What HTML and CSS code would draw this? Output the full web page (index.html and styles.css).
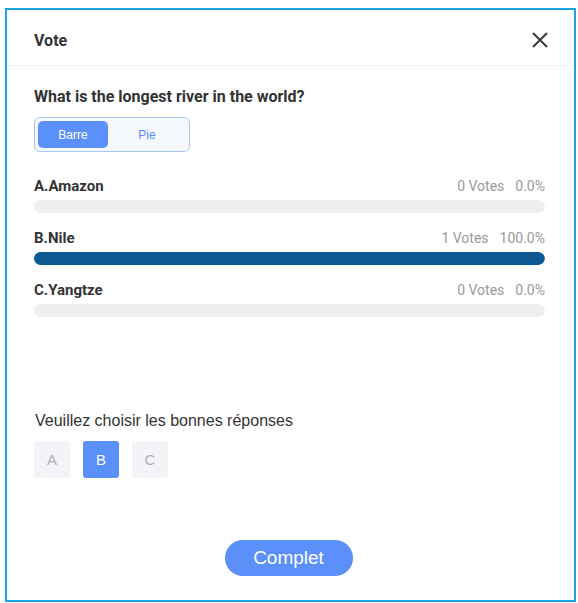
FILE: index.html
```html
<!DOCTYPE html>
<html>
<head>
<meta charset="utf-8">
<link rel="stylesheet" href="styles.css">
</head>
<body>
<div class="frame">
  <div class="header">
    <div class="title">Vote</div>
    <svg class="close" width="18" height="18" viewBox="0 0 18 18"><path d="M2 2L16 16M16 2L2 16" stroke="#3a3a3a" stroke-width="2" fill="none"/></svg>
  </div>
  <div class="body">
    <div class="question">What is the longest river in the world?</div>
    <div class="toggle">
      <div class="tab active">Barre</div>
      <div class="tab">Pie</div>
    </div>
    <div class="options">
      <div class="option">
        <div class="row"><span class="label">A.Amazon</span><span class="stats">0 Votes<span class="pct">0.0%</span></span></div>
        <div class="bar"><div class="fill" style="width:0%"></div></div>
      </div>
      <div class="option">
        <div class="row"><span class="label">B.Nile</span><span class="stats">1 Votes<span class="pct">100.0%</span></span></div>
        <div class="bar"><div class="fill" style="width:100%"></div></div>
      </div>
      <div class="option">
        <div class="row"><span class="label">C.Yangtze</span><span class="stats">0 Votes<span class="pct">0.0%</span></span></div>
        <div class="bar"><div class="fill" style="width:0%"></div></div>
      </div>
    </div>
    <div class="prompt">Veuillez choisir les bonnes réponses</div>
    <div class="choices">
      <div class="choice">A</div>
      <div class="choice selected">B</div>
      <div class="choice">C</div>
    </div>
    <div class="footer">
      <button class="submit">Complet</button>
    </div>
  </div>
</div>
</body>
</html>
```
FILE: styles.css
```css
html, body {
  margin: 0;
  padding: 0;
  background: #ffffff;
}
body {
  font-family: Roboto, "Liberation Sans", Arial, sans-serif;
  color: #333;
}
.frame {
  margin: 8px 2px 1px 5px;
  height: 594px;
  border: 2px solid #1ba4e3;
  box-sizing: border-box;
  display: flex;
  flex-direction: column;
}
.header {
  height: 50px;
  border-bottom: 1px solid #f0f0f0;
  display: flex;
  align-items: center;
  justify-content: space-between;
  padding: 5px 25px 0 27px;
  flex-shrink: 0;
}
.title {
  font-size: 16px;
  font-weight: 700;
  color: #333;
}
.close {
  display: block;
}
.body {
  flex: 1;
  display: flex;
  flex-direction: column;
  padding: 0 29px 0 27px;
}
.question {
  margin-top: 22px;
  font-size: 16px;
  font-weight: 700;
  color: #333;
  line-height: 18px;
}
.toggle {
  margin-top: 11px;
  width: 156px;
  height: 35px;
  box-sizing: border-box;
  border: 1px solid #a9c7ee;
  border-radius: 6px;
  background: #f5f9fe;
  display: flex;
  align-items: center;
  padding: 0 3px;
}
.tab {
  width: 70px;
  height: 27px;
  border-radius: 5px;
  display: flex;
  align-items: center;
  justify-content: center;
  font-family: "Liberation Sans", Arial, sans-serif;
  font-size: 12px;
  color: #5b8ff9;
}
.tab + .tab {
  width: 78px;
}
.tab.active {
  background: #5b8ff9;
  color: #fff;
}
.options {
  margin-top: 25px;
  display: flex;
  flex-direction: column;
  gap: 16px;
}
.row {
  display: flex;
  justify-content: space-between;
  align-items: baseline;
  height: 18px;
  line-height: 18px;
}
.label {
  font-size: 15px;
  font-weight: 700;
  color: #333;
}
.stats {
  font-size: 14px;
  color: #9a9a9a;
}
.pct {
  margin-left: 11px;
}
.bar {
  margin-top: 5px;
  height: 13px;
  border-radius: 7px;
  background: #efefef;
  overflow: hidden;
}
.fill {
  height: 100%;
  background: #0c5893;
  border-radius: 0 7px 7px 0;
}
.prompt {
  margin-top: 95px;
  font-family: "Liberation Sans", Arial, sans-serif;
  font-size: 16px;
  line-height: 18px;
  color: #333;
  padding-left: 1px;
}
.choices {
  margin-top: 11px;
  display: flex;
  gap: 13px;
}
.choice {
  width: 36px;
  height: 37px;
  border-radius: 3px;
  background: #f3f4f8;
  color: #b0b0b0;
  font-family: "Liberation Sans", Arial, sans-serif;
  font-size: 15px;
  display: flex;
  align-items: center;
  justify-content: center;
}
.choice.selected {
  background: #5b8ff9;
  color: #fff;
}
.footer {
  flex: 1;
  display: flex;
  justify-content: center;
  align-items: flex-start;
  padding-top: 62px;
  padding-right: 2px;
}
.submit {
  width: 128px;
  height: 36px;
  border: none;
  border-radius: 18px;
  background: #5b8ff9;
  color: #fff;
  font-family: "Liberation Sans", Arial, sans-serif;
  font-size: 19px;
  padding: 0;
  cursor: pointer;
}
```
